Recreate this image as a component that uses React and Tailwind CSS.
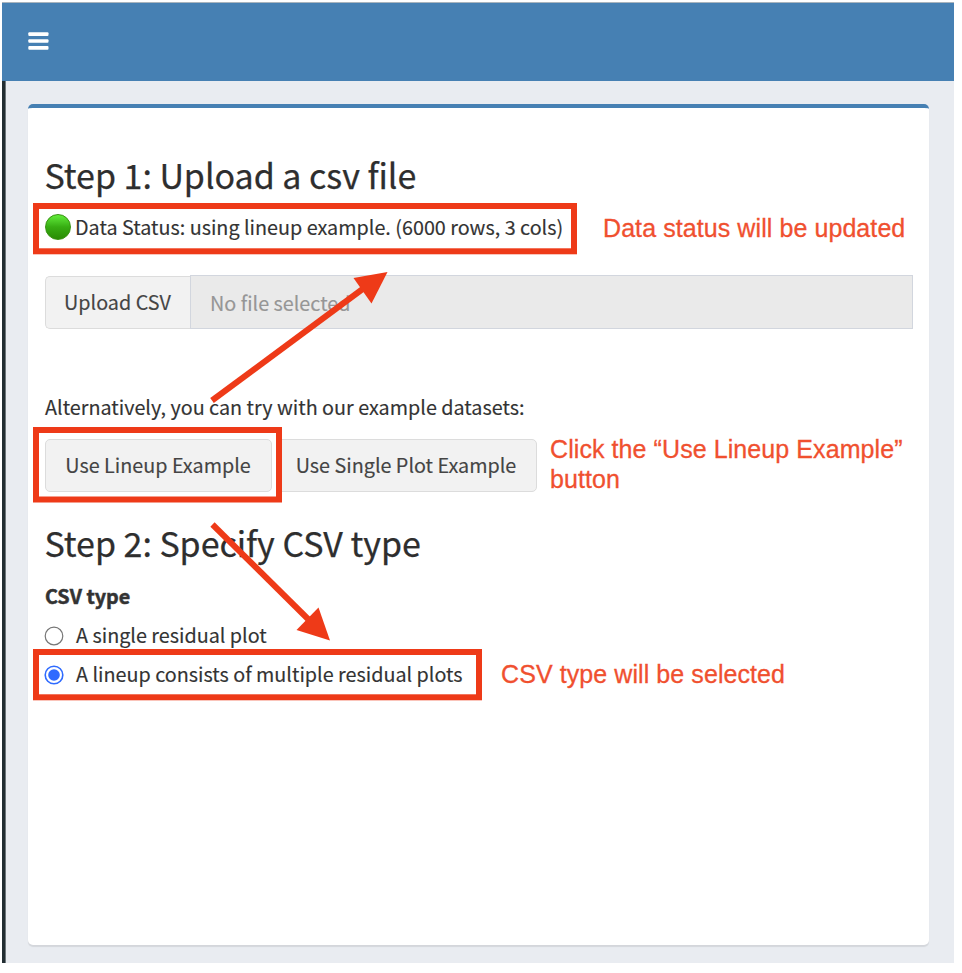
const RED = "#ee3a18";

function Heading({ children, className }) {
  return (
    <h2 className={`h-10 text-[34px] leading-10 tracking-[-0.03px] whitespace-nowrap text-[#2e2e2e] [-webkit-text-stroke:0.25px_#2e2e2e] ${className}`}>
      <span>{children}</span>
    </h2>
  );
}

function Radio({ checked }) {
  return (
    <svg className="mt-[3px] size-5 shrink-0" viewBox="0 0 20 20">
      <circle cx="10" cy="10" r="8.8" fill="#fff" stroke={checked ? "#2f6bff" : "#767676"} strokeWidth={checked ? 1.6 : 1.2} />
      {checked && <circle cx="10" cy="10" r="5.8" fill="#2f6bff" />}
    </svg>
  );
}

function Button({ children, className }) {
  return (
    <button className={`shrink-0 border border-[#dcdcdc] bg-[#f2f2f2] pr-px pb-0.5 text-center whitespace-nowrap text-[#444] [-webkit-text-stroke:0.15px_#444] ${className}`}>
      <span>{children}</span>
    </button>
  );
}

function Note({ children, className }) {
  return (
    <div className={`absolute font-['Liberation_Sans',sans-serif] text-[25px] leading-[30px] tracking-[0.08px] whitespace-nowrap text-[#f0502f] [-webkit-text-stroke:0.3px_#f0502f] ${className}`}>
      {children}
    </div>
  );
}

function Annotations() {
  return (
    <>
      <svg className="absolute top-0 left-0" width="962" height="973" viewBox="0 0 962 973">
        <g fill="none" stroke={RED} strokeWidth="6">
          <rect x="36" y="206" width="538" height="45.3" />
          <rect x="36" y="430" width="243" height="69.5" />
          <rect x="36" y="652" width="443" height="45.3" />
          <path d="M212 400.5 L364 288" />
          <path d="M212.5 524.5 L308 619" />
        </g>
        <g fill={RED}>
          <path d="M387.5 272 L353.5 278 L371.5 303.5 Z" />
          <path d="M330 640.5 L296.5 630 L318.5 607.5 Z" />
        </g>
      </svg>
      <Note className="top-[213px] left-[603px]"><span>Data status will be updated</span></Note>
      <Note className="top-[434px] left-[550px]"><span>Click the “Use Lineup Example”</span><br /><span>button</span></Note>
      <Note className="top-[659px] left-[501px]"><span>CSV type will be selected</span></Note>
    </>
  );
}

export default function App() {
  return (
    <div className="relative h-[973px] w-[962px] overflow-hidden bg-white pt-[2px] pl-[2px] font-['Noto_Sans_CJK_SC','Noto_Sans_CJK_JP',sans-serif] text-[19.78px] leading-[31px] text-[#333]">
      <div className="flex h-[961px] w-[952px] flex-col">
        <header className="flex h-[79px] shrink-0 items-center border-t border-[#a9b4bd] bg-[#4680b3] pb-0.5 pl-[26px]">
          <svg width="21" height="18" viewBox="0 0 21 18" fill="#fff">
            <rect x="0.3" y="0.3" width="20.2" height="3.6" rx="1" />
            <rect x="0.3" y="7.2" width="20.2" height="3.6" rx="1" />
            <rect x="0.3" y="14.1" width="20.2" height="3.6" rx="1" />
          </svg>
        </header>
        <div className="flex grow">
          <aside className="w-1 shrink-0 border-r border-[#6f777b] bg-[#222d32]" />
          <main className="grow bg-[#e9ecf1] pt-[23px] pl-[22px]">
            <section className="flex h-[841px] w-[901px] flex-col rounded-[5px] border-t-4 border-[#4680b3] bg-white pt-[47px] pr-4 pl-[17px] shadow-[0_1.5px_1px_rgba(0,0,0,0.09)] [-webkit-text-stroke:0.15px_#333]">
              <Heading className="-ml-[0.5px]">Step 1: Upload a csv file</Heading>
              <div className="mt-4 flex h-[31px] items-center">
                <span className="mr-1 size-[26px] shrink-0 rounded-full border border-[#36920f] bg-linear-to-b from-[#62ee3a] via-[#37ad12] to-[#2a8c05]" />
                <span className="whitespace-nowrap">Data Status: using lineup example. (6000 rows, 3 cols)</span>
              </div>
              <div className="mt-[33px] flex h-[54px] items-end">
                <Button className="h-[53px] w-[145px] rounded-l-[5px] border-r-0">Upload CSV</Button>
                <div className="flex h-[54px] grow items-center border border-[#d2d6de] bg-[#eaeaea] pl-[19px] text-[#969696] [-webkit-text-stroke:0.15px_#969696]"><span>No file selected</span></div>
              </div>
              <p className="mt-[62px] whitespace-nowrap"><span>Alternatively, you can try with our example datasets:</span></p>
              <div className="mt-[17px] flex gap-1">
                <Button className="h-[53px] w-[227px] rounded-[5px]">Use Lineup Example</Button>
                <Button className="h-[53px] w-[261px] rounded-[5px]">Use Single Plot Example</Button>
              </div>
              <Heading className="mt-[31px] -ml-[0.5px]">Step 2: Specify CSV type</Heading>
              <p className="mt-[17px] font-bold [-webkit-text-stroke:0.5px_#333]"><span>CSV type</span></p>
              <label className="mt-2 -ml-px flex items-center gap-3"><Radio /><span>A single residual plot</span></label>
              <label className="mt-2 -ml-px flex items-center gap-3"><Radio checked /><span>A lineup consists of multiple residual plots</span></label>
            </section>
          </main>
        </div>
      </div>
      <Annotations />
    </div>
  );
}
